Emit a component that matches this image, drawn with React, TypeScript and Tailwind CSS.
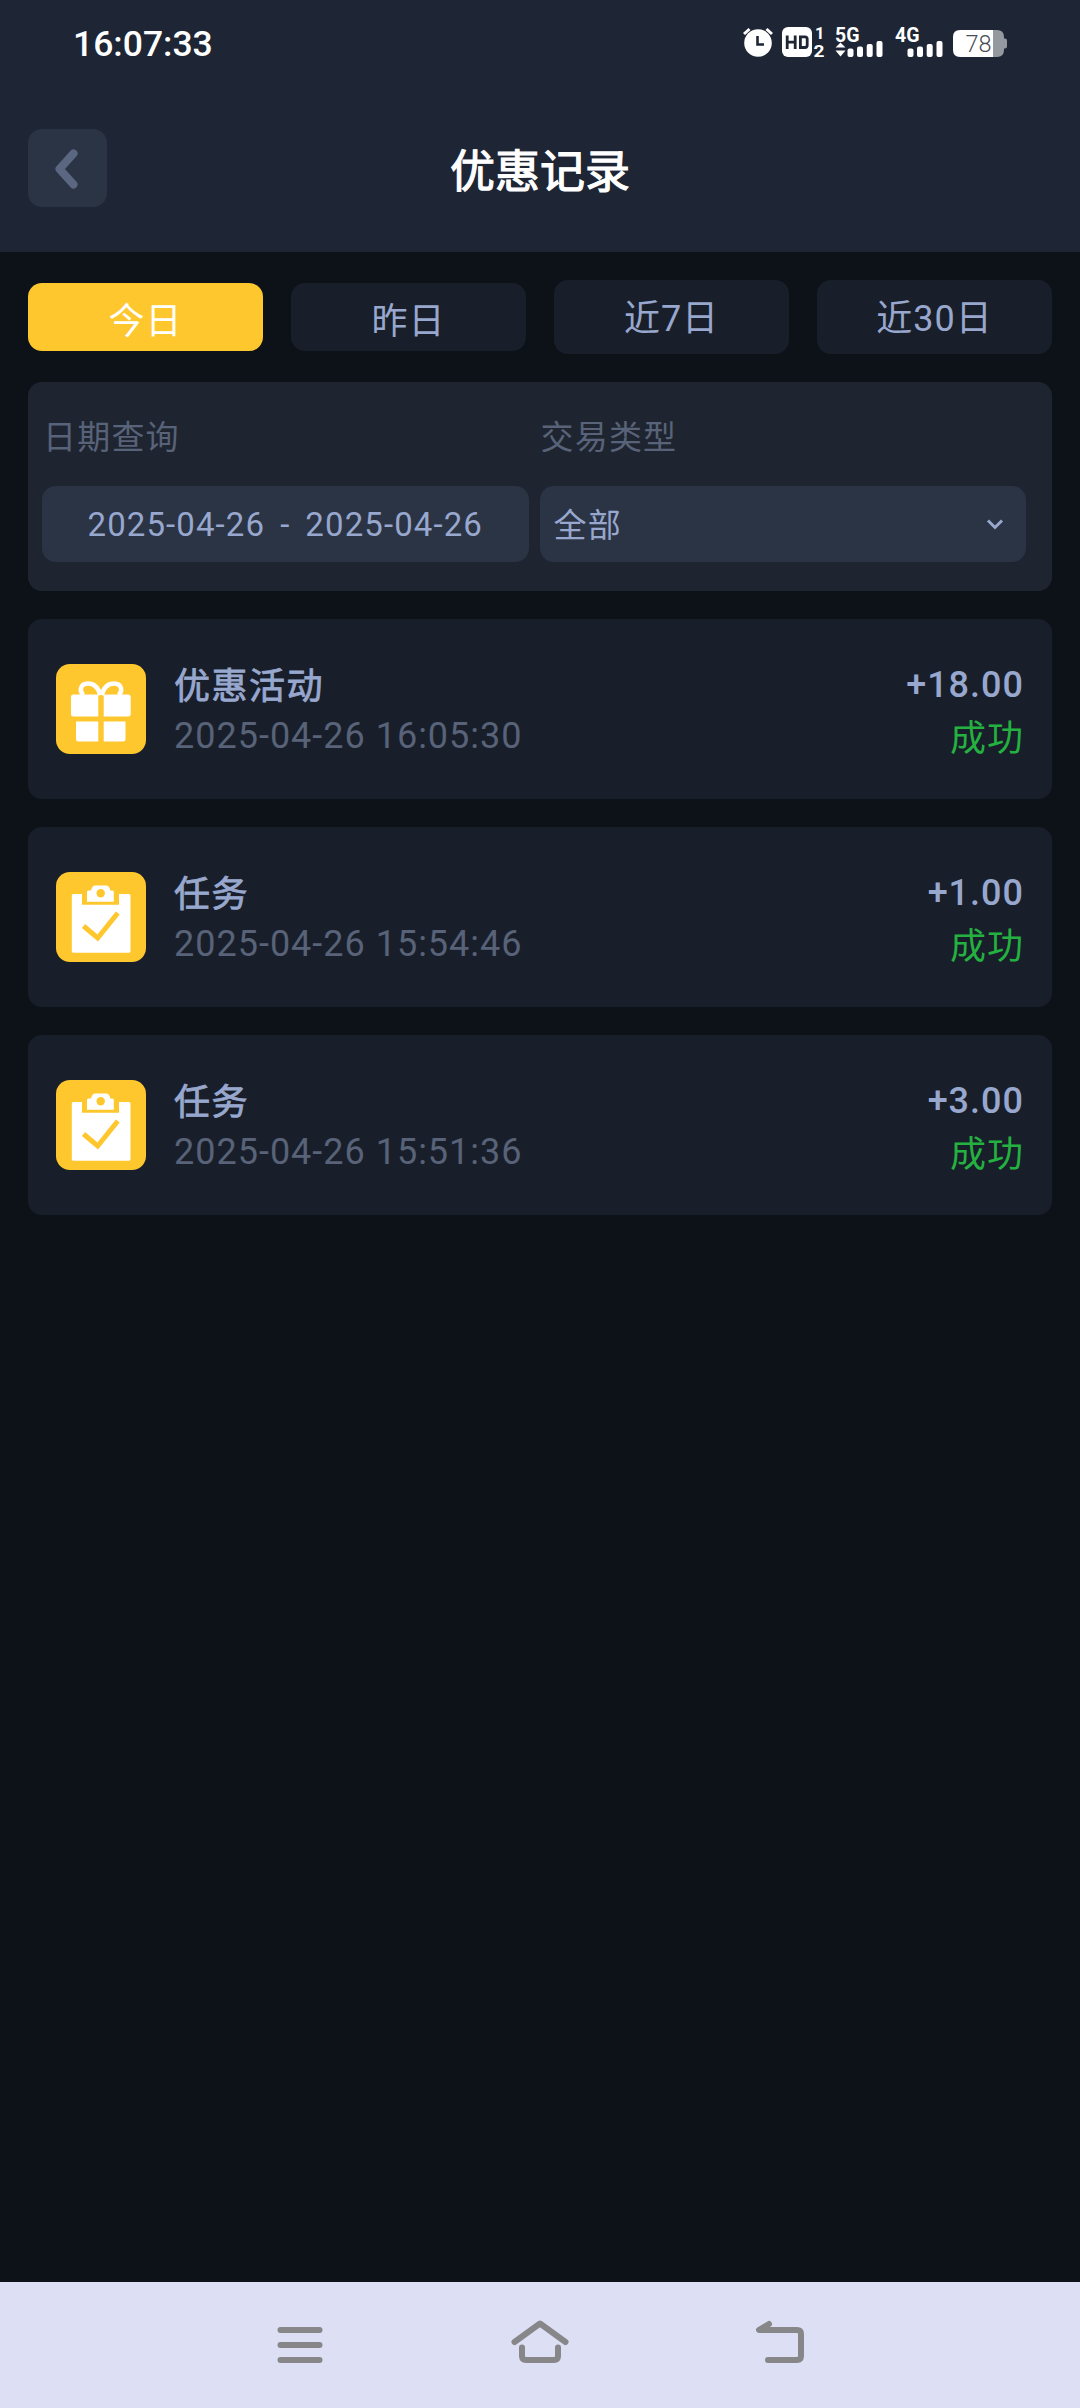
import { useState } from 'react'
import clsx from 'clsx'

type RecordKind = 'gift' | 'task'

interface PromoRecord {
  id: number
  kind: RecordKind
  title: string
  time: string
  amount: string
  status: string
}

const RANGES = [
  { key: 'today', label: '今日', box: 'h-[68px] pt-[9px]' },
  { key: 'yesterday', label: '昨日', box: 'h-[68px] pt-[9px]' },
  { key: 'week', label: '近7日', box: 'h-[74px] pt-1' },
  { key: 'month', label: '近30日', box: 'h-[74px] pt-1' },
]

const RECORDS: PromoRecord[] = [
  { id: 1, kind: 'gift', title: '优惠活动', time: '2025-04-26 16:05:30', amount: '+18.00', status: '成功' },
  { id: 2, kind: 'task', title: '任务', time: '2025-04-26 15:54:46', amount: '+1.00', status: '成功' },
  { id: 3, kind: 'task', title: '任务', time: '2025-04-26 15:51:36', amount: '+3.00', status: '成功' },
]

function AlarmIcon() {
  return (
    <svg width="30" height="30" viewBox="0 0 30 30" fill="none">
      <circle cx="15" cy="16" r="13.8" fill="#fff" />
      <path d="M1 7 6.500 2M29 7 23.500 2" stroke="#fff" strokeWidth="3" />
      <path d="M14.5 9v8.5h6.5" stroke="#1e2534" strokeWidth="2.6" />
    </svg>
  )
}

function HdIcon() {
  return (
    <svg width="44" height="30" viewBox="0 0 44 30" className="overflow-visible">
      <rect width="30" height="30" rx="6" fill="#fff" />
      <path d="M5.2 8.5v13.500M13.2 8.5v13.500M5.2 15.200h8" stroke="#1e2534" strokeWidth="2.8" fill="none" />
      <path d="M18.4 9.900h4.600q2.200 0 2.200 2.200v6.200q0 2.200-2.200 2.200h-4.600z" stroke="#1e2534" strokeWidth="2.8" fill="none" />
      <text x="33" y="12" fontSize="16.5" fontWeight="700" fill="#fff">1</text>
      <text x="31.5" y="30" fontSize="17" fontWeight="700" fill="#fff" textLength="11" lengthAdjust="spacingAndGlyphs">2</text>
    </svg>
  )
}

function SignalIcon({ label, arrows }: { label: string; arrows?: boolean }) {
  return (
    <svg width="48" height="30" viewBox="0 0 48 30" fill="#fff" className="overflow-visible">
      <text x="0" y="14.5" fontSize="20.5" fontWeight="700" textLength="24.5" lengthAdjust="spacingAndGlyphs">{label}</text>
      {arrows && <path d="M0.5 20.5 5.5 15.5l5 5zM0.5 23.5h10l-5 6z" />}
      <rect x="12.5" y="21.5" width="6" height="8.5" rx="2" />
      <rect x="22" y="19.5" width="6" height="10.5" rx="2" />
      <rect x="31.7" y="17" width="6" height="13" rx="2" />
      <rect x="41.5" y="14" width="6" height="16" rx="2" />
    </svg>
  )
}

function BatteryIcon() {
  return (
    <svg width="54" height="27" viewBox="0 0 54 27">
      <path d="M40 0h4q7 0 7 7v1.500h1q2 0 2 2v6q0 2-2 2h-1V20q0 7-7 7h-4z" fill="#94989f" />
      <path d="M7 0h33v27H7q-7 0-7-7V7q0-7 7-7z" fill="#fff" />
      <text x="12.5" y="22" fontSize="23.5" fontWeight="300" fill="#4a4d55">78</text>
    </svg>
  )
}

function StatusBar() {
  return (
    <div className="flex h-[86px] items-center justify-between pl-[73px] pr-[73px]">
      <span className="pt-[3px] text-[35.5px] font-medium leading-none text-white">16:07:33</span>
      <div className="flex items-end pb-[2px]">
        <AlarmIcon />
        <div className="ml-[9px]"><HdIcon /></div>
        <div className="ml-[9px]"><SignalIcon label="5G" arrows /></div>
        <div className="ml-[12px]"><SignalIcon label="4G" /></div>
        <div className="ml-[10px]"><BatteryIcon /></div>
      </div>
    </div>
  )
}

function GiftIcon() {
  return (
    <svg width="90" height="90" viewBox="0 0 90 90">
      <path d="M44.500 31C42 23 37 19.500 32 19.500c-8 0-9 8-4.500 11.500M45.500 31C48 23 53 19.500 58 19.500c8 0 9 8 4.500 11.500" fill="none" stroke="#fff" strokeWidth="4.500" />
      <path d="M17 30.500h25.300V52.500H17.500q-2.500 0-2.500-2.500V33q0-2.500 2.500-2.500zM47.700 30.500H72.200q2.500 0 2.500 2.500v17q0 2.500-2.500 2.500H47.700zM20 57.500h22.300v20H22.500q-2.500 0-2.500-2.500zM47.700 57.500H69.500V75q0 2.500-2.500 2.500H47.700z" fill="#fff" />
    </svg>
  )
}

function TaskIcon() {
  return (
    <svg width="90" height="90" viewBox="0 0 90 90">
      <path d="M17 22h9v10.700h37V22h10q1.500 0 1.500 1.500v55.700q0 1.500-1.500 1.500H17.300q-1.500 0-1.500-1.500V23.500q0-1.500 1.200-1.500z" fill="#fff" />
      <path d="M31 29.700V20q0-1.500 1.500-1.500H35q1-4.900 4.500-4.900h10.500q3.500 0 4.300 4.900H56.500q1.300 0 1.300 1.500v9.700z" fill="#fff" />
      <circle cx="44.700" cy="21.300" r="4.200" fill="#ffc72e" />
      <path d="M27.500 54 41.700 66 61.800 41" fill="none" stroke="#ffc72e" strokeWidth="5" />
    </svg>
  )
}

function RecordCard({ record }: { record: PromoRecord }) {
  return (
    <div className="flex h-[180px] items-center rounded-[14px] bg-[#191f2a] px-7">
      <div className="h-[90px] w-[90px] shrink-0 overflow-hidden rounded-[14px] bg-[#ffc72e]">
        {record.kind === 'gift' ? <GiftIcon /> : <TaskIcon />}
      </div>
      <div className="ml-7 flex min-w-0 flex-1 flex-col pt-[5px] text-[36px]">
        <span className="h-[49px] leading-[51px] tracking-[1.5px] text-[#98a7cd] [-webkit-text-stroke:0.8px]">{record.title}</span>
        <span className="h-[50px] leading-[50px] tracking-[1px] text-[#586278]">{record.time}</span>
      </div>
      <div className="flex flex-col items-end pt-[5px] text-[36px] tracking-[1px]">
        <span className="h-[52px] font-medium leading-[48px] text-[#98a7cd]">{record.amount}</span>
        <span className="h-[50px] leading-[52px] text-[#24b140]">{record.status}</span>
      </div>
    </div>
  )
}

function NavBar() {
  return (
    <nav className="flex h-[126px] items-center justify-center gap-[180px] bg-[#dddff4] text-[#87878a]">
      <button aria-label="菜单">
        <svg width="60" height="60" viewBox="0 0 60 60" fill="none" stroke="currentColor" strokeWidth="6" strokeLinecap="round">
          <path d="M10.500 15h39M10.500 30h39M10.500 45h39" />
        </svg>
      </button>
      <button aria-label="主页">
        <svg width="60" height="60" viewBox="0 0 60 60" fill="none" stroke="currentColor" strokeWidth="6" strokeLinecap="round" strokeLinejoin="round">
          <path d="M4.500 27 30 8.500 55.500 27" />
          <path d="M12 32.500V41q0 4 4 4h28q4 0 4-4v-8.500" />
        </svg>
      </button>
      <button aria-label="返回">
        <svg width="60" height="60" viewBox="0 0 60 60" fill="none" stroke="currentColor" strokeWidth="6" strokeLinecap="round" strokeLinejoin="round">
          <path d="M19 9 9 15h38q4 0 4 4v22q0 4-4 4H18" />
        </svg>
      </button>
    </nav>
  )
}

export default function App() {
  const [range, setRange] = useState('today')

  return (
    <div className="flex h-[2408px] w-[1080px] flex-col bg-[#0d1219] font-[Roboto,'Noto_Sans_CJK_SC',sans-serif]">
      <header className="h-[252px] bg-[#1e2534]">
        <StatusBar />
        <div className="grid h-[164px] grid-cols-[1fr_auto_1fr] items-center px-7">
          <button aria-label="返回" className="flex h-[78px] w-[79px] items-center justify-center rounded-[14px] bg-[#2b3445]">
            <svg width="40" height="50" viewBox="0 0 40 50" fill="none" stroke="#5b6781" strokeWidth="8" strokeLinecap="round" strokeLinejoin="round">
              <path d="M25.500 10.500 11.500 26l14 15.500" />
            </svg>
          </button>
          <h1 className="pt-[10px] text-[45px] leading-[60px] text-white [-webkit-text-stroke:1.2px]">优惠记录</h1>
        </div>
      </header>

      <main className="flex flex-1 flex-col px-7 pt-7">
        {/* Range tabs */}
        <div className="grid h-[74px] grid-cols-4 items-center gap-7">
          {RANGES.map((r) => (
            <button
              key={r.key}
              onClick={() => setRange(r.key)}
              className={clsx(
                'rounded-[14px] text-[36px] leading-none tracking-[1px]',
                r.box,
                range === r.key ? 'bg-[#ffc72e] text-white' : 'bg-[#191f2a] text-[#98a7cd]',
              )}
            >
              {r.label}
            </button>
          ))}
        </div>

        {/* Filters */}
        <section className="mt-7 flex h-[209px] gap-[11px] rounded-[14px] bg-[#1f2530] pl-[14px] pr-[26px] text-[33px] tracking-[1.2px]">
          <div className="flex-1">
            <div className="h-[104px] pl-px pt-8 leading-[48px] text-[#586278]">日期查询</div>
            <button className="flex h-[76px] w-full items-center justify-center gap-[15px] rounded-[14px] bg-[#2b3445] pt-px tracking-[1.1px] text-[#98a7cd]">
              <span>2025-04-26</span>
              <span>-</span>
              <span>2025-04-26</span>
            </button>
          </div>
          <div className="flex-1">
            <div className="h-[104px] pl-px pt-8 leading-[48px] text-[#586278]">交易类型</div>
            <button className="flex h-[76px] w-full items-center justify-between rounded-[14px] bg-[#2b3445] pl-[14px] pr-[20px] text-[#98a7cd]">
              <span className="pt-1">全部</span>
              <svg width="22" height="16" viewBox="0 0 22 16" fill="none" stroke="#98a7cd" strokeWidth="3">
                <path d="M4 4.500 11 11.500l7-7" />
              </svg>
            </button>
          </div>
        </section>

        <div className="mt-7 flex flex-col gap-7">
          {RECORDS.map((record) => (
            <RecordCard key={record.id} record={record} />
          ))}
        </div>
      </main>

      <NavBar />
    </div>
  )
}
